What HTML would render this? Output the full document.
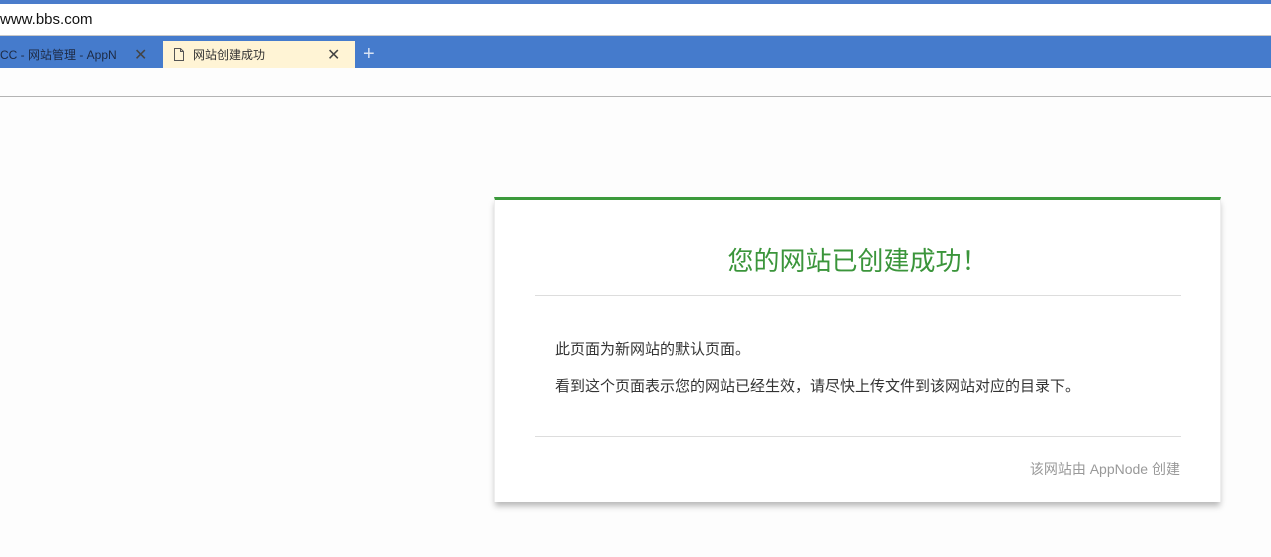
<!DOCTYPE html><html><head><meta charset="utf-8"><style>
*{margin:0;padding:0;box-sizing:border-box}
body{width:1271px;height:557px;overflow:hidden;background:#fdfdfd;font-family:"Liberation Sans","Noto Sans CJK SC",sans-serif;position:relative}
.top{position:absolute;left:0;top:0;width:1271px;height:4px;background:#4a7ccb}
.addr{position:absolute;left:0;top:4px;width:1271px;height:32px;background:#fff;border-bottom:1px solid #c8c8c8;font-size:15px;color:#111;line-height:31px;padding-left:0}
.tabs{position:absolute;left:0;top:36px;width:1271px;height:32px;background:#457bcc}
.tab{position:absolute;top:5px;height:27px;font-size:12px;line-height:29px;color:#333}
.t1{left:0;width:162px;color:#1d2a44;padding-left:0}
.t2{left:163px;width:192px;background:#fff4d5;padding-left:30px}
.x{position:absolute;top:0;font-size:16px;color:#444}
.plus{position:absolute;left:363px;top:5px;color:#d8e3f4;font-size:20px;line-height:27px}
.hr{position:absolute;left:0;top:96px;width:1271px;height:1px;background:#b4b4b4}
.card{position:absolute;left:494px;top:197px;width:727px;height:305px;background:#fff;border-top:3px solid #3c9a3c;border-left:1px solid #eee;border-right:1px solid #eee;box-shadow:0 5px 6px -1px rgba(0,0,0,.28)}
h1{position:absolute;left:0;width:100%;top:41px;text-align:center;font-size:26px;font-weight:normal;color:#3b953b}
.d{position:absolute;left:40px;width:646px;height:1px;background:#ddd}
p{position:absolute;left:60px;font-size:15px;color:#333}
.f{position:absolute;right:40px;top:259px;font-size:14px;color:#999}
</style></head><body>
<div class="top"></div>
<div class="addr">www.bbs.com</div>
<div class="tabs">
<div class="tab t1">CC - 网站管理 - AppN<span class="x" style="left:134px">✕</span></div>
<div class="tab t2"><svg style="position:absolute;left:11px;top:7px" width="10" height="13" viewBox="0 0 10 13"><path d="M.5.5h6l3 3v9h-9z M6.5.5v3h3" fill="none" stroke="#555"/></svg>网站创建成功<span class="x" style="left:164px">✕</span></div>
<div class="plus">+</div>
</div>
<div class="hr"></div>
<div class="card">
<h1>您的网站已创建成功！</h1>
<div class="d" style="top:95px"></div>
<p style="top:138px">此页面为新网站的默认页面。</p>
<p style="top:175px">看到这个页面表示您的网站已经生效，请尽快上传文件到该网站对应的目录下。</p>
<div class="d" style="top:236px"></div>
<div class="f">该网站由 AppNode 创建</div>
</div>
</body></html>
